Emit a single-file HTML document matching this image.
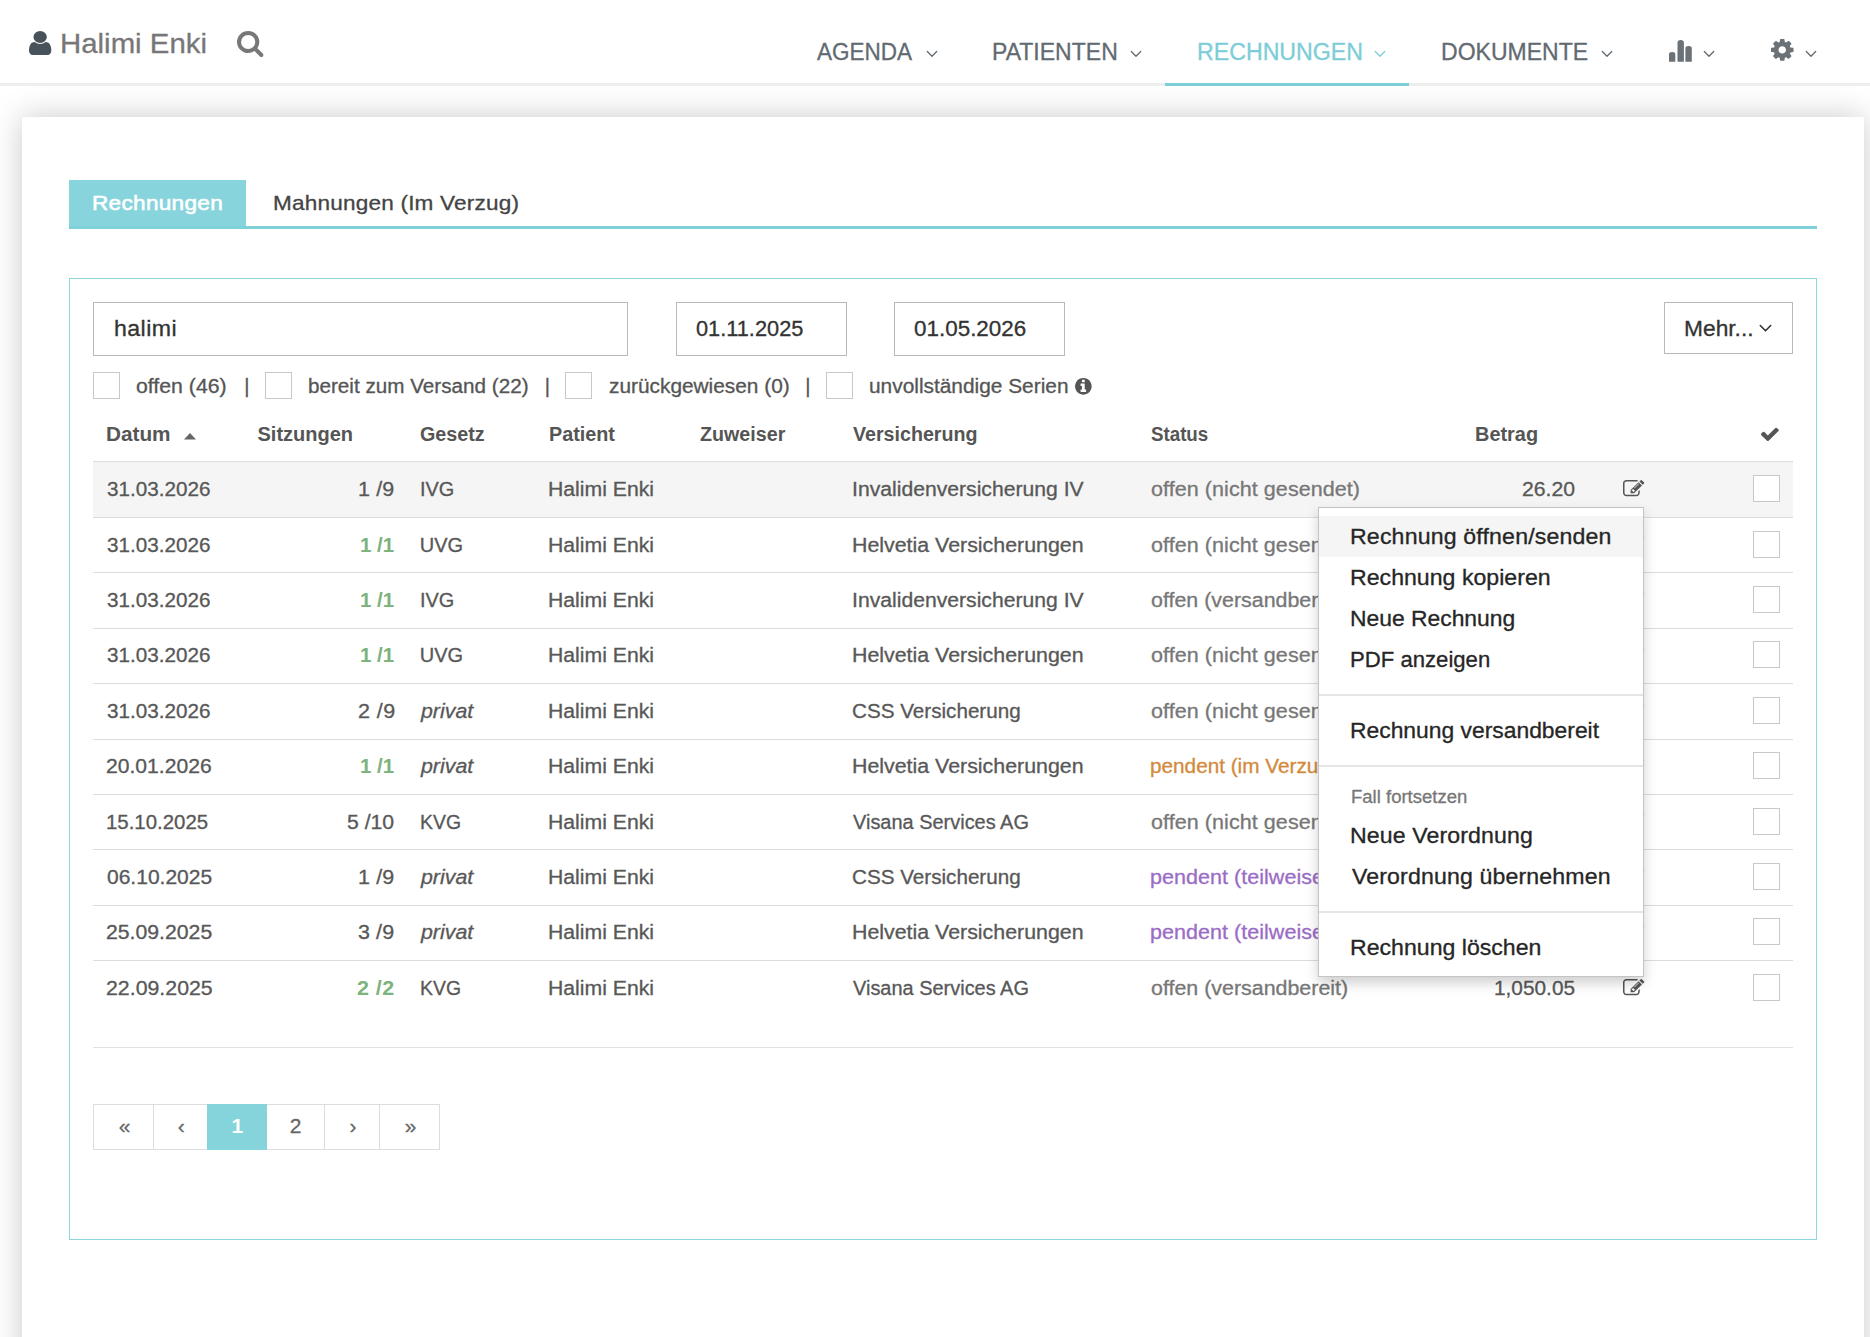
<!DOCTYPE html>
<html lang="de"><head><meta charset="utf-8"><title>Rechnungen</title>
<style>
html,body{margin:0;padding:0;background:#fff;}
body{position:relative;width:1870px;height:1337px;overflow:hidden;font-family:"Liberation Sans", Arial, sans-serif;}
.t{position:absolute;white-space:pre;display:block;transform-origin:0 0;-webkit-text-stroke:0.3px;}
.a,div.rowbg,.cb,.dd{position:absolute;display:block;}
svg.a{overflow:visible}
.cb{box-sizing:border-box;border:1px solid #c8c8c8;background:#fff;}
.inp{position:absolute;box-sizing:border-box;border:1px solid #b9b9b9;background:#fff;}
.dd{box-sizing:border-box;background:#fff;border:1px solid rgba(0,0,0,.23);box-shadow:0 6px 12px rgba(0,0,0,.19);}
#container{position:absolute;left:22px;top:117px;width:1842px;height:1300px;background:#fff;box-shadow:0 0 30px rgba(0,0,0,.21);}
#header{position:absolute;left:0;top:0;width:1870px;height:83px;background:#fff;border-bottom:3px solid #eee;}
</style></head>
<body>
<div id="container"></div>
<header id="header"></header>
<div class="brand"><svg class="a" style="left:29.4px;top:31px" width="22.300000000000004" height="24" viewBox="0 128 1280 1536" preserveAspectRatio="none"><path fill="#47525b" d="M1280 1399q0 109-62.500 187t-150.500 78h-854q-88 0-150.500-78t-62.500-187q0-85 8.500-160.500t31.500-152 58.500-131 94-89 134.500-34.500q131 128 313 128t313-128q76 0 134.500 34.500t94 89 58.500 131 31.500 152 8.500 160.500zM1024 512q0 159-112.500 271.500t-271.500 112.500-271.500-112.500-112.500-271.500 112.500-271.500 271.500-112.500 271.500 112.500 112.500 271.500z"/></svg><svg class="a" style="left:236.6px;top:31px" width="26.400000000000006" height="26" viewBox="0 128 1664 1664" preserveAspectRatio="none"><path fill="#777" d="M1152 832q0-185-131.500-316.500t-316.500-131.500-316.500 131.500-131.500 316.500 131.500 316.500 316.500 131.500 316.500-131.500 131.500-316.500zM1664 1664q0 52-38 90t-90 38q-54 0-90-38l-343-342q-179 124-399 124-143 0-273.500-55.500t-225-150-150-225-55.500-273.500 55.500-273.500 150-225 225-150 273.500-55.500 273.500 55.500 225 150 150 225 55.500 273.500q0 220-124 399l343 343q37 37 37 90z"/></svg><span class="t" style="left:59.50px;top:29.50px;font-size:28px;line-height:28px;color:#777;transform:scaleX(1.0497);">Halimi Enki</span></div>
<nav><div class="a" style="left:1165px;top:83px;width:244px;height:3px;background:#7ccfd8"></div><span class="t" style="left:817.40px;top:41.28px;font-size:23.3px;line-height:23.3px;color:#626a71;transform:scaleX(0.9671);">AGENDA</span>
<span class="t" style="left:992.31px;top:41.28px;font-size:23.3px;line-height:23.3px;color:#626a71;transform:scaleX(0.9883);">PATIENTEN</span>
<span class="t" style="left:1196.51px;top:41.28px;font-size:23.3px;line-height:23.3px;color:#7ccdd7;transform:scaleX(0.9942);">RECHNUNGEN</span>
<span class="t" style="left:1441.41px;top:41.28px;font-size:23.3px;line-height:23.3px;color:#626a71;transform:scaleX(0.9884);">DOKUMENTE</span><svg class="a" style="left:925.5px;top:49.6px" width="12.0" height="7.8" viewBox="-1 -1 12.0 7.8" ><polyline points="0.3,0.5 5.0,5.2 9.7,0.5" fill="none" stroke="#626a71" stroke-width="1.3" stroke-linecap="round" stroke-linejoin="round"/></svg><svg class="a" style="left:1129.8px;top:49.6px" width="12.0" height="7.8" viewBox="-1 -1 12.0 7.8" ><polyline points="0.3,0.5 5.0,5.2 9.7,0.5" fill="none" stroke="#626a71" stroke-width="1.3" stroke-linecap="round" stroke-linejoin="round"/></svg><svg class="a" style="left:1374.2px;top:49.6px" width="12.0" height="7.8" viewBox="-1 -1 12.0 7.8" ><polyline points="0.3,0.5 5.0,5.2 9.7,0.5" fill="none" stroke="#7ccdd7" stroke-width="1.3" stroke-linecap="round" stroke-linejoin="round"/></svg><svg class="a" style="left:1600.6px;top:49.6px" width="12.0" height="7.8" viewBox="-1 -1 12.0 7.8" ><polyline points="0.3,0.5 5.0,5.2 9.7,0.5" fill="none" stroke="#626a71" stroke-width="1.3" stroke-linecap="round" stroke-linejoin="round"/></svg><svg class="a" style="left:1668px;top:39px" width="25" height="24" viewBox="0 0 25 24" ><path fill="#6a7177" d="M1 22.7V15.2q0-2.2 3.15-2.2t3.15 2.2V22.7z M9.5 22.7V3.6q0-2.6 3.2-2.6t3.2 2.6V22.7z M17.4 22.7V9.2q0-2.2 3.2-2.2t3.2 2.2V22.7z"/></svg><svg class="a" style="left:1703.2px;top:49.6px" width="12.0" height="7.8" viewBox="-1 -1 12.0 7.8" ><polyline points="0.3,0.5 5.0,5.2 9.7,0.5" fill="none" stroke="#626a71" stroke-width="1.3" stroke-linecap="round" stroke-linejoin="round"/></svg><svg class="a" style="left:1770.5px;top:38.8px" width="22.5" height="21.800000000000004" viewBox="0 128 1536 1536" preserveAspectRatio="none"><path fill="#6a7177" d="M1024 896q0-106-75-181t-181-75-181 75-75 181 75 181 181 75 181-75 75-181zM1536 787v222q0 12-8 23t-20 13l-185 28q-19 54-39 91 35 50 107 138 10 12 10 25t-9 23q-27 37-99 108t-94 71q-12 0-26-9l-138-108q-44 23-91 38-16 136-29 186-7 28-36 28h-222q-14 0-24.500-8.500t-11.500-21.500l-28-184q-49-16-90-37l-141 107q-10 9-25 9-14 0-25-11-126-114-165-168-7-10-7-23 0-12 8-23 15-21 51-66.500t54-70.500q-27-50-41-99l-183-27q-13-2-21-12.500t-8-23.500v-222q0-12 8-23t19-13l186-28q14-46 39-92-40-57-107-138-10-12-10-24 0-10 9-23 26-36 98.500-107.500t94.500-71.500q13 0 26 10l138 107q44-23 91-38 16-136 29-186 7-28 36-28h222q14 0 24.500 8.500t11.500 21.500l28 184q49 16 90 37l142-107q9-9 24-9 13 0 25 10 129 119 165 170 7 8 7 22 0 12-8 23-15 21-51 66.500t-54 70.500q26 50 41 98l183 28q13 2 21 12.500t8 23.500z"/></svg><svg class="a" style="left:1805.3px;top:49.6px" width="12.0" height="7.8" viewBox="-1 -1 12.0 7.8" ><polyline points="0.3,0.5 5.0,5.2 9.7,0.5" fill="none" stroke="#626a71" stroke-width="1.3" stroke-linecap="round" stroke-linejoin="round"/></svg></nav>
<main>
<div class="tabs">
<div class="a" style="left:69px;top:180px;width:177px;height:49px;background:#87d4dc"></div>
<div class="a" style="left:69px;top:226px;width:1748px;height:3px;background:#7fd1d9"></div>
<span class="t" style="left:92.33px;top:192.02px;font-size:21px;line-height:21px;color:#fff;transform:scaleX(1.0750);letter-spacing:0.276px;-webkit-text-stroke:0.55px #fff;">Rechnungen</span>
<span class="t" style="left:272.82px;top:192.02px;font-size:21px;line-height:21px;color:#444;transform:scaleX(1.0750);letter-spacing:0.179px;">Mahnungen (Im Verzug)</span>
</div>
<section class="panel">
<div class="a" style="left:69px;top:278px;width:1748px;height:962px;border:1px solid #8fd6dc;box-sizing:border-box"></div>
<div class="filter">
<div class="inp" style="left:93px;top:302px;width:535px;height:54px;"></div><div class="inp" style="left:676px;top:302px;width:171px;height:54px;"></div><div class="inp" style="left:894px;top:302px;width:171px;height:54px;"></div><div class="inp" style="left:1664px;top:302px;width:129px;height:52px;"></div>
<svg class="a" style="left:1759.3px;top:324.3px" width="13" height="8.4" viewBox="-1 -1 13 8.4" ><polyline points="0.3,0.5 5.5,5.800000000000001 10.7,0.5" fill="none" stroke="#333" stroke-width="1.6" stroke-linecap="round" stroke-linejoin="round"/></svg>
<span class="cb" style="left:93px;top:372px;width:27px;height:27px;"></span><span class="cb" style="left:265px;top:372px;width:27px;height:27px;"></span><span class="cb" style="left:565px;top:372px;width:27px;height:27px;"></span><span class="cb" style="left:826px;top:372px;width:27px;height:27px;"></span><svg class="a" style="left:1074.9px;top:377.5px" width="16.699999999999818" height="16.69999999999999" viewBox="0 128 1536 1536" preserveAspectRatio="none"><path fill="#555" d="M1024 1376v-160q0-14-9-23t-23-9h-96v-512q0-14-9-23t-23-9h-320q-14 0-23 9t-9 23v160q0 14 9 23t23 9h96v320h-96q-14 0-23 9t-9 23v160q0 14 9 23t23 9h448q14 0 23-9t9-23zM896 480v-160q0-14-9-23t-23-9h-192q-14 0-23 9t-9 23v160q0 14 9 23t23 9h192q14 0 23-9t9-23zM1536 896q0 209-103 385.500t-279.500 279.500-385.500 103-385.500-103-279.500-279.500-103-385.500 103-385.500 279.500-279.500 385.500-103 385.500 103 279.500 279.500 103 385.500z"/></svg>
<span class="t" style="left:113.62px;top:318.60px;font-size:21.5px;line-height:21.5px;color:#333;transform:scaleX(1.0750);letter-spacing:0.399px;">halimi</span>
<span class="t" style="left:696.30px;top:318.60px;font-size:21.5px;line-height:21.5px;color:#333;transform:scaleX(1.0127);">01.11.2025</span>
<span class="t" style="left:914.40px;top:318.60px;font-size:21.5px;line-height:21.5px;color:#333;transform:scaleX(1.0432);">01.05.2026</span>
<span class="t" style="left:1683.94px;top:318.60px;font-size:21.5px;line-height:21.5px;color:#333;transform:scaleX(1.0589);">Mehr...</span>
<span class="t" style="left:136.00px;top:375.67px;font-size:20px;line-height:20px;color:#555;transform:scaleX(1.0628);">offen (46)</span>
<span class="t" style="left:244.20px;top:375.67px;font-size:20px;line-height:20px;color:#555;">|</span>
<span class="t" style="left:307.93px;top:375.67px;font-size:20px;line-height:20px;color:#555;transform:scaleX(1.0332);">bereit zum Versand (22)</span>
<span class="t" style="left:544.80px;top:375.67px;font-size:20px;line-height:20px;color:#555;">|</span>
<span class="t" style="left:608.70px;top:375.67px;font-size:20px;line-height:20px;color:#555;transform:scaleX(1.0420);">zurückgewiesen (0)</span>
<span class="t" style="left:805.20px;top:375.67px;font-size:20px;line-height:20px;color:#555;">|</span>
<span class="t" style="left:869.34px;top:375.67px;font-size:20px;line-height:20px;color:#555;transform:scaleX(1.0433);">unvollständige Serien</span>
</div>
<div class="table">
<div class="thead"><div class="a" style="left:93px;top:461px;width:1700px;height:1.3999999999999773px;background:#ddd"></div><span class="t" style="left:105.66px;top:424.47px;font-size:20px;line-height:20px;color:#555;transform:scaleX(1.0373);font-weight:700;-webkit-text-stroke:0;">Datum</span>
<span class="t" style="left:257.50px;top:424.47px;font-size:20px;line-height:20px;color:#555;font-weight:700;-webkit-text-stroke:0;">Sitzungen</span>
<span class="t" style="left:420.30px;top:424.47px;font-size:20px;line-height:20px;color:#555;transform:scaleX(0.9865);font-weight:700;-webkit-text-stroke:0;">Gesetz</span>
<span class="t" style="left:548.97px;top:424.47px;font-size:20px;line-height:20px;color:#555;transform:scaleX(0.9891);font-weight:700;-webkit-text-stroke:0;">Patient</span>
<span class="t" style="left:699.50px;top:424.47px;font-size:20px;line-height:20px;color:#555;transform:scaleX(0.9837);font-weight:700;-webkit-text-stroke:0;">Zuweiser</span>
<span class="t" style="left:852.70px;top:424.47px;font-size:20px;line-height:20px;color:#555;transform:scaleX(0.9825);font-weight:700;-webkit-text-stroke:0;">Versicherung</span>
<span class="t" style="left:1150.90px;top:424.47px;font-size:20px;line-height:20px;color:#555;transform:scaleX(0.9361);font-weight:700;-webkit-text-stroke:0;">Status</span>
<span class="t" style="left:1474.70px;top:424.47px;font-size:20px;line-height:20px;color:#555;transform:scaleX(0.9962);font-weight:700;-webkit-text-stroke:0;">Betrag</span><svg class="a" style="left:184px;top:432.6px" width="12" height="6.4" viewBox="0 0 12 6.4" ><path d="M0 6.4L6 0l6 6.4z" fill="#666"/></svg><svg class="a" style="left:1760.5px;top:427.5px" width="17.799999999999955" height="13.100000000000023" viewBox="121 362 1550 1160" preserveAspectRatio="none"><path fill="#555" d="M1671 566q0 40-28 68l-724 724-136 136q-28 28-68 28t-68-28l-136-136-362-362q-28-28-28-68t28-68l136-136q28-28 68-28t68 28l294 295 656-657q28-28 68-28t68 28l136 136q28 28 28 68z"/></svg></div>
<div class="tr"><div class="a" style="left:93px;top:462px;width:1700px;height:55px;background:#f5f5f5"></div><div class="a" style="left:93px;top:517px;width:1700px;height:1px;background:#dcdcdc"></div><span class="t" style="left:106.70px;top:479.27px;font-size:20px;line-height:20px;color:#585858;transform:scaleX(1.0333);">31.03.2026</span>
<span class="t" style="left:357.93px;top:479.27px;font-size:20px;line-height:20px;color:#585858;transform:scaleX(1.0750);letter-spacing:0.107px;">1 /9</span>
<span class="t" style="left:419.70px;top:479.27px;font-size:20px;line-height:20px;color:#585858;transform:scaleX(0.9971);">IVG</span>
<span class="t" style="left:547.94px;top:479.27px;font-size:20px;line-height:20px;color:#585858;transform:scaleX(1.0601);">Halimi Enki</span>
<span class="t" style="left:851.64px;top:479.27px;font-size:20px;line-height:20px;color:#585858;transform:scaleX(1.0577);">Invalidenversicherung IV</span>
<span class="t" style="left:1150.90px;top:479.27px;font-size:20px;line-height:20px;color:#777;transform:scaleX(1.0750);letter-spacing:0.063px;">offen (nicht gesendet)</span>
<span class="t" style="left:1521.84px;top:479.27px;font-size:20px;line-height:20px;color:#585858;transform:scaleX(1.0608);">26.20</span><svg class="a" style="left:1622.9px;top:480px" width="21.299999999999955" height="16.19999999999999" viewBox="0 130 1792 1410" preserveAspectRatio="none"><path fill="#555" d="M888 1184l116-116-152-152-116 116v56h96v96h56zM1328 464q-16-16-33 1l-350 350q-17 17-1 33t33-1l350-350q17-17 1-33zM1408 1058v190q0 119-84.500 203.500t-203.500 84.500h-832q-119 0-203.500-84.500t-84.500-203.500v-832q0-119 84.500-203.500t203.500-84.500h832q63 0 117 25 15 7 18 23 3 17-9 29l-49 49q-14 14-32 8-23-6-45-6h-832q-66 0-113 47t-47 113v832q0 66 47 113t113 47h832q66 0 113-47t47-113v-126q0-13 9-22l64-64q15-15 35-7t20 29zM1312 320l288 288-672 672h-288v-288zM1756 452l-92 92-288-288 92-92q28-28 68-28t68 28l152 152q28 28 28 68t-28 68z"/></svg><span class="cb" style="left:1753px;top:475px;width:27px;height:27px;"></span></div>
<div class="tr"><div class="a" style="left:93px;top:572px;width:1700px;height:1px;background:#dcdcdc"></div><span class="t" style="left:106.70px;top:534.67px;font-size:20px;line-height:20px;color:#585858;transform:scaleX(1.0333);">31.03.2026</span>
<span class="t" style="left:359.98px;top:534.67px;font-size:20px;line-height:20px;color:#7db37c;transform:scaleX(1.0237);font-weight:700;-webkit-text-stroke:0;">1 /1</span>
<span class="t" style="left:419.70px;top:534.67px;font-size:20px;line-height:20px;color:#585858;">UVG</span>
<span class="t" style="left:547.94px;top:534.67px;font-size:20px;line-height:20px;color:#585858;transform:scaleX(1.0601);">Halimi Enki</span>
<span class="t" style="left:851.63px;top:534.67px;font-size:20px;line-height:20px;color:#585858;transform:scaleX(1.0681);">Helvetia Versicherungen</span>
<span class="t" style="left:1150.90px;top:534.67px;font-size:20px;line-height:20px;color:#777;transform:scaleX(1.0750);letter-spacing:0.063px;">offen (nicht gesendet)</span>
<span class="t" style="left:1511.31px;top:534.67px;font-size:20px;line-height:20px;color:#585858;transform:scaleX(1.0400);">108.00</span><svg class="a" style="left:1622.9px;top:535px" width="21.299999999999955" height="16.200000000000045" viewBox="0 130 1792 1410" preserveAspectRatio="none"><path fill="#555" d="M888 1184l116-116-152-152-116 116v56h96v96h56zM1328 464q-16-16-33 1l-350 350q-17 17-1 33t33-1l350-350q17-17 1-33zM1408 1058v190q0 119-84.500 203.500t-203.500 84.500h-832q-119 0-203.500-84.500t-84.500-203.500v-832q0-119 84.500-203.500t203.500-84.500h832q63 0 117 25 15 7 18 23 3 17-9 29l-49 49q-14 14-32 8-23-6-45-6h-832q-66 0-113 47t-47 113v832q0 66 47 113t113 47h832q66 0 113-47t47-113v-126q0-13 9-22l64-64q15-15 35-7t20 29zM1312 320l288 288-672 672h-288v-288zM1756 452l-92 92-288-288 92-92q28-28 68-28t68 28l152 152q28 28 28 68t-28 68z"/></svg><span class="cb" style="left:1753px;top:531px;width:27px;height:27px;"></span></div>
<div class="tr"><div class="a" style="left:93px;top:628px;width:1700px;height:1px;background:#dcdcdc"></div><span class="t" style="left:106.70px;top:590.07px;font-size:20px;line-height:20px;color:#585858;transform:scaleX(1.0333);">31.03.2026</span>
<span class="t" style="left:359.98px;top:590.07px;font-size:20px;line-height:20px;color:#7db37c;transform:scaleX(1.0237);font-weight:700;-webkit-text-stroke:0;">1 /1</span>
<span class="t" style="left:419.70px;top:590.07px;font-size:20px;line-height:20px;color:#585858;transform:scaleX(0.9971);">IVG</span>
<span class="t" style="left:547.94px;top:590.07px;font-size:20px;line-height:20px;color:#585858;transform:scaleX(1.0601);">Halimi Enki</span>
<span class="t" style="left:851.64px;top:590.07px;font-size:20px;line-height:20px;color:#585858;transform:scaleX(1.0577);">Invalidenversicherung IV</span>
<span class="t" style="left:1150.90px;top:590.07px;font-size:20px;line-height:20px;color:#777;transform:scaleX(1.0702);">offen (versandbereit)</span>
<span class="t" style="left:1522.88px;top:590.07px;font-size:20px;line-height:20px;color:#585858;transform:scaleX(1.0400);">48.00</span><svg class="a" style="left:1622.9px;top:591px" width="21.299999999999955" height="16.200000000000045" viewBox="0 130 1792 1410" preserveAspectRatio="none"><path fill="#555" d="M888 1184l116-116-152-152-116 116v56h96v96h56zM1328 464q-16-16-33 1l-350 350q-17 17-1 33t33-1l350-350q17-17 1-33zM1408 1058v190q0 119-84.500 203.500t-203.500 84.500h-832q-119 0-203.500-84.500t-84.500-203.500v-832q0-119 84.500-203.500t203.500-84.500h832q63 0 117 25 15 7 18 23 3 17-9 29l-49 49q-14 14-32 8-23-6-45-6h-832q-66 0-113 47t-47 113v832q0 66 47 113t113 47h832q66 0 113-47t47-113v-126q0-13 9-22l64-64q15-15 35-7t20 29zM1312 320l288 288-672 672h-288v-288zM1756 452l-92 92-288-288 92-92q28-28 68-28t68 28l152 152q28 28 28 68t-28 68z"/></svg><span class="cb" style="left:1753px;top:586px;width:27px;height:27px;"></span></div>
<div class="tr"><div class="a" style="left:93px;top:683px;width:1700px;height:1px;background:#dcdcdc"></div><span class="t" style="left:106.70px;top:645.47px;font-size:20px;line-height:20px;color:#585858;transform:scaleX(1.0333);">31.03.2026</span>
<span class="t" style="left:359.98px;top:645.47px;font-size:20px;line-height:20px;color:#7db37c;transform:scaleX(1.0237);font-weight:700;-webkit-text-stroke:0;">1 /1</span>
<span class="t" style="left:419.70px;top:645.47px;font-size:20px;line-height:20px;color:#585858;">UVG</span>
<span class="t" style="left:547.94px;top:645.47px;font-size:20px;line-height:20px;color:#585858;transform:scaleX(1.0601);">Halimi Enki</span>
<span class="t" style="left:851.63px;top:645.47px;font-size:20px;line-height:20px;color:#585858;transform:scaleX(1.0681);">Helvetia Versicherungen</span>
<span class="t" style="left:1150.90px;top:645.47px;font-size:20px;line-height:20px;color:#777;transform:scaleX(1.0750);letter-spacing:0.063px;">offen (nicht gesendet)</span>
<span class="t" style="left:1511.31px;top:645.47px;font-size:20px;line-height:20px;color:#585858;transform:scaleX(1.0400);">108.00</span><svg class="a" style="left:1622.9px;top:646px" width="21.299999999999955" height="16.200000000000045" viewBox="0 130 1792 1410" preserveAspectRatio="none"><path fill="#555" d="M888 1184l116-116-152-152-116 116v56h96v96h56zM1328 464q-16-16-33 1l-350 350q-17 17-1 33t33-1l350-350q17-17 1-33zM1408 1058v190q0 119-84.500 203.500t-203.500 84.500h-832q-119 0-203.500-84.500t-84.500-203.500v-832q0-119 84.500-203.500t203.500-84.500h832q63 0 117 25 15 7 18 23 3 17-9 29l-49 49q-14 14-32 8-23-6-45-6h-832q-66 0-113 47t-47 113v832q0 66 47 113t113 47h832q66 0 113-47t47-113v-126q0-13 9-22l64-64q15-15 35-7t20 29zM1312 320l288 288-672 672h-288v-288zM1756 452l-92 92-288-288 92-92q28-28 68-28t68 28l152 152q28 28 28 68t-28 68z"/></svg><span class="cb" style="left:1753px;top:641px;width:27px;height:27px;"></span></div>
<div class="tr"><div class="a" style="left:93px;top:739px;width:1700px;height:1px;background:#dcdcdc"></div><span class="t" style="left:106.70px;top:700.87px;font-size:20px;line-height:20px;color:#585858;transform:scaleX(1.0333);">31.03.2026</span>
<span class="t" style="left:357.88px;top:700.87px;font-size:20px;line-height:20px;color:#585858;transform:scaleX(1.0750);letter-spacing:0.417px;">2 /9</span>
<span class="t" style="left:421.07px;top:700.87px;font-size:20px;line-height:20px;color:#585858;transform:scaleX(1.0672);font-style:italic;">privat</span>
<span class="t" style="left:547.94px;top:700.87px;font-size:20px;line-height:20px;color:#585858;transform:scaleX(1.0601);">Halimi Enki</span>
<span class="t" style="left:851.67px;top:700.87px;font-size:20px;line-height:20px;color:#585858;transform:scaleX(1.0323);">CSS Versicherung</span>
<span class="t" style="left:1150.90px;top:700.87px;font-size:20px;line-height:20px;color:#777;transform:scaleX(1.0750);letter-spacing:0.063px;">offen (nicht gesendet)</span>
<span class="t" style="left:1522.88px;top:700.87px;font-size:20px;line-height:20px;color:#585858;transform:scaleX(1.0400);">96.00</span><svg class="a" style="left:1622.9px;top:702px" width="21.299999999999955" height="16.200000000000045" viewBox="0 130 1792 1410" preserveAspectRatio="none"><path fill="#555" d="M888 1184l116-116-152-152-116 116v56h96v96h56zM1328 464q-16-16-33 1l-350 350q-17 17-1 33t33-1l350-350q17-17 1-33zM1408 1058v190q0 119-84.500 203.500t-203.500 84.500h-832q-119 0-203.500-84.500t-84.500-203.500v-832q0-119 84.500-203.500t203.500-84.500h832q63 0 117 25 15 7 18 23 3 17-9 29l-49 49q-14 14-32 8-23-6-45-6h-832q-66 0-113 47t-47 113v832q0 66 47 113t113 47h832q66 0 113-47t47-113v-126q0-13 9-22l64-64q15-15 35-7t20 29zM1312 320l288 288-672 672h-288v-288zM1756 452l-92 92-288-288 92-92q28-28 68-28t68 28l152 152q28 28 28 68t-28 68z"/></svg><span class="cb" style="left:1753px;top:697px;width:27px;height:27px;"></span></div>
<div class="tr"><div class="a" style="left:93px;top:794px;width:1700px;height:1px;background:#dcdcdc"></div><span class="t" style="left:105.64px;top:756.27px;font-size:20px;line-height:20px;color:#585858;transform:scaleX(1.0558);">20.01.2026</span>
<span class="t" style="left:359.98px;top:756.27px;font-size:20px;line-height:20px;color:#7db37c;transform:scaleX(1.0237);font-weight:700;-webkit-text-stroke:0;">1 /1</span>
<span class="t" style="left:421.07px;top:756.27px;font-size:20px;line-height:20px;color:#585858;transform:scaleX(1.0672);font-style:italic;">privat</span>
<span class="t" style="left:547.94px;top:756.27px;font-size:20px;line-height:20px;color:#585858;transform:scaleX(1.0601);">Halimi Enki</span>
<span class="t" style="left:851.63px;top:756.27px;font-size:20px;line-height:20px;color:#585858;transform:scaleX(1.0681);">Helvetia Versicherungen</span>
<span class="t" style="left:1149.86px;top:756.27px;font-size:20px;line-height:20px;color:#d28a3c;transform:scaleX(1.0368);">pendent (im Verzug)</span>
<span class="t" style="left:1522.88px;top:756.27px;font-size:20px;line-height:20px;color:#585858;transform:scaleX(1.0400);">48.00</span><svg class="a" style="left:1622.9px;top:757px" width="21.299999999999955" height="16.200000000000045" viewBox="0 130 1792 1410" preserveAspectRatio="none"><path fill="#555" d="M888 1184l116-116-152-152-116 116v56h96v96h56zM1328 464q-16-16-33 1l-350 350q-17 17-1 33t33-1l350-350q17-17 1-33zM1408 1058v190q0 119-84.500 203.500t-203.500 84.500h-832q-119 0-203.500-84.500t-84.500-203.500v-832q0-119 84.500-203.500t203.500-84.500h832q63 0 117 25 15 7 18 23 3 17-9 29l-49 49q-14 14-32 8-23-6-45-6h-832q-66 0-113 47t-47 113v832q0 66 47 113t113 47h832q66 0 113-47t47-113v-126q0-13 9-22l64-64q15-15 35-7t20 29zM1312 320l288 288-672 672h-288v-288zM1756 452l-92 92-288-288 92-92q28-28 68-28t68 28l152 152q28 28 28 68t-28 68z"/></svg><span class="cb" style="left:1753px;top:752px;width:27px;height:27px;"></span></div>
<div class="tr"><div class="a" style="left:93px;top:849px;width:1700px;height:1px;background:#dcdcdc"></div><span class="t" style="left:105.68px;top:811.67px;font-size:20px;line-height:20px;color:#585858;transform:scaleX(1.0205);">15.10.2025</span>
<span class="t" style="left:347.00px;top:811.67px;font-size:20px;line-height:20px;color:#585858;transform:scaleX(1.0595);">5 /10</span>
<span class="t" style="left:419.73px;top:811.67px;font-size:20px;line-height:20px;color:#585858;transform:scaleX(0.9710);">KVG</span>
<span class="t" style="left:547.94px;top:811.67px;font-size:20px;line-height:20px;color:#585858;transform:scaleX(1.0601);">Halimi Enki</span>
<span class="t" style="left:852.70px;top:811.67px;font-size:20px;line-height:20px;color:#585858;transform:scaleX(0.9975);">Visana Services AG</span>
<span class="t" style="left:1150.90px;top:811.67px;font-size:20px;line-height:20px;color:#777;transform:scaleX(1.0750);letter-spacing:0.063px;">offen (nicht gesendet)</span>
<span class="t" style="left:1511.31px;top:811.67px;font-size:20px;line-height:20px;color:#585858;transform:scaleX(1.0400);">240.00</span><svg class="a" style="left:1622.9px;top:812px" width="21.299999999999955" height="16.200000000000045" viewBox="0 130 1792 1410" preserveAspectRatio="none"><path fill="#555" d="M888 1184l116-116-152-152-116 116v56h96v96h56zM1328 464q-16-16-33 1l-350 350q-17 17-1 33t33-1l350-350q17-17 1-33zM1408 1058v190q0 119-84.500 203.500t-203.500 84.500h-832q-119 0-203.500-84.500t-84.500-203.500v-832q0-119 84.500-203.500t203.500-84.500h832q63 0 117 25 15 7 18 23 3 17-9 29l-49 49q-14 14-32 8-23-6-45-6h-832q-66 0-113 47t-47 113v832q0 66 47 113t113 47h832q66 0 113-47t47-113v-126q0-13 9-22l64-64q15-15 35-7t20 29zM1312 320l288 288-672 672h-288v-288zM1756 452l-92 92-288-288 92-92q28-28 68-28t68 28l152 152q28 28 28 68t-28 68z"/></svg><span class="cb" style="left:1753px;top:808px;width:27px;height:27px;"></span></div>
<div class="tr"><div class="a" style="left:93px;top:905px;width:1700px;height:1px;background:#dcdcdc"></div><span class="t" style="left:106.70px;top:867.07px;font-size:20px;line-height:20px;color:#585858;transform:scaleX(1.0503);">06.10.2025</span>
<span class="t" style="left:357.93px;top:867.07px;font-size:20px;line-height:20px;color:#585858;transform:scaleX(1.0750);letter-spacing:0.107px;">1 /9</span>
<span class="t" style="left:421.07px;top:867.07px;font-size:20px;line-height:20px;color:#585858;transform:scaleX(1.0672);font-style:italic;">privat</span>
<span class="t" style="left:547.94px;top:867.07px;font-size:20px;line-height:20px;color:#585858;transform:scaleX(1.0601);">Halimi Enki</span>
<span class="t" style="left:851.67px;top:867.07px;font-size:20px;line-height:20px;color:#585858;transform:scaleX(1.0323);">CSS Versicherung</span>
<span class="t" style="left:1149.83px;top:867.07px;font-size:20px;line-height:20px;color:#9a6cc6;transform:scaleX(1.0750);letter-spacing:0.037px;">pendent (teilweise bezahlt)</span>
<span class="t" style="left:1522.88px;top:867.07px;font-size:20px;line-height:20px;color:#585858;transform:scaleX(1.0400);">48.00</span><svg class="a" style="left:1622.9px;top:868px" width="21.299999999999955" height="16.200000000000045" viewBox="0 130 1792 1410" preserveAspectRatio="none"><path fill="#555" d="M888 1184l116-116-152-152-116 116v56h96v96h56zM1328 464q-16-16-33 1l-350 350q-17 17-1 33t33-1l350-350q17-17 1-33zM1408 1058v190q0 119-84.500 203.500t-203.500 84.500h-832q-119 0-203.500-84.500t-84.500-203.500v-832q0-119 84.500-203.500t203.500-84.500h832q63 0 117 25 15 7 18 23 3 17-9 29l-49 49q-14 14-32 8-23-6-45-6h-832q-66 0-113 47t-47 113v832q0 66 47 113t113 47h832q66 0 113-47t47-113v-126q0-13 9-22l64-64q15-15 35-7t20 29zM1312 320l288 288-672 672h-288v-288zM1756 452l-92 92-288-288 92-92q28-28 68-28t68 28l152 152q28 28 28 68t-28 68z"/></svg><span class="cb" style="left:1753px;top:863px;width:27px;height:27px;"></span></div>
<div class="tr"><div class="a" style="left:93px;top:960px;width:1700px;height:1px;background:#dcdcdc"></div><span class="t" style="left:105.64px;top:922.47px;font-size:20px;line-height:20px;color:#585858;transform:scaleX(1.0609);">25.09.2025</span>
<span class="t" style="left:358.00px;top:922.47px;font-size:20px;line-height:20px;color:#585858;transform:scaleX(1.0750);letter-spacing:0.084px;">3 /9</span>
<span class="t" style="left:421.07px;top:922.47px;font-size:20px;line-height:20px;color:#585858;transform:scaleX(1.0672);font-style:italic;">privat</span>
<span class="t" style="left:547.94px;top:922.47px;font-size:20px;line-height:20px;color:#585858;transform:scaleX(1.0601);">Halimi Enki</span>
<span class="t" style="left:851.63px;top:922.47px;font-size:20px;line-height:20px;color:#585858;transform:scaleX(1.0681);">Helvetia Versicherungen</span>
<span class="t" style="left:1149.83px;top:922.47px;font-size:20px;line-height:20px;color:#9a6cc6;transform:scaleX(1.0750);letter-spacing:0.037px;">pendent (teilweise bezahlt)</span>
<span class="t" style="left:1511.31px;top:922.47px;font-size:20px;line-height:20px;color:#585858;transform:scaleX(1.0400);">144.00</span><svg class="a" style="left:1622.9px;top:923px" width="21.299999999999955" height="16.200000000000045" viewBox="0 130 1792 1410" preserveAspectRatio="none"><path fill="#555" d="M888 1184l116-116-152-152-116 116v56h96v96h56zM1328 464q-16-16-33 1l-350 350q-17 17-1 33t33-1l350-350q17-17 1-33zM1408 1058v190q0 119-84.500 203.500t-203.500 84.500h-832q-119 0-203.500-84.500t-84.500-203.500v-832q0-119 84.500-203.500t203.500-84.500h832q63 0 117 25 15 7 18 23 3 17-9 29l-49 49q-14 14-32 8-23-6-45-6h-832q-66 0-113 47t-47 113v832q0 66 47 113t113 47h832q66 0 113-47t47-113v-126q0-13 9-22l64-64q15-15 35-7t20 29zM1312 320l288 288-672 672h-288v-288zM1756 452l-92 92-288-288 92-92q28-28 68-28t68 28l152 152q28 28 28 68t-28 68z"/></svg><span class="cb" style="left:1753px;top:918px;width:27px;height:27px;"></span></div>
<div class="tr"><span class="t" style="left:105.63px;top:977.87px;font-size:20px;line-height:20px;color:#585858;transform:scaleX(1.0659);">22.09.2025</span>
<span class="t" style="left:357.00px;top:977.87px;font-size:20px;line-height:20px;color:#7db37c;transform:scaleX(1.0750);letter-spacing:0.394px;font-weight:700;-webkit-text-stroke:0;">2 /2</span>
<span class="t" style="left:419.73px;top:977.87px;font-size:20px;line-height:20px;color:#585858;transform:scaleX(0.9710);">KVG</span>
<span class="t" style="left:547.94px;top:977.87px;font-size:20px;line-height:20px;color:#585858;transform:scaleX(1.0601);">Halimi Enki</span>
<span class="t" style="left:852.70px;top:977.87px;font-size:20px;line-height:20px;color:#585858;transform:scaleX(0.9975);">Visana Services AG</span>
<span class="t" style="left:1150.90px;top:977.87px;font-size:20px;line-height:20px;color:#777;transform:scaleX(1.0702);">offen (versandbereit)</span>
<span class="t" style="left:1493.86px;top:977.87px;font-size:20px;line-height:20px;color:#585858;transform:scaleX(1.0413);">1,050.05</span><svg class="a" style="left:1622.9px;top:979px" width="21.299999999999955" height="16.200000000000045" viewBox="0 130 1792 1410" preserveAspectRatio="none"><path fill="#555" d="M888 1184l116-116-152-152-116 116v56h96v96h56zM1328 464q-16-16-33 1l-350 350q-17 17-1 33t33-1l350-350q17-17 1-33zM1408 1058v190q0 119-84.500 203.500t-203.500 84.500h-832q-119 0-203.500-84.500t-84.500-203.500v-832q0-119 84.500-203.500t203.500-84.500h832q63 0 117 25 15 7 18 23 3 17-9 29l-49 49q-14 14-32 8-23-6-45-6h-832q-66 0-113 47t-47 113v832q0 66 47 113t113 47h832q66 0 113-47t47-113v-126q0-13 9-22l64-64q15-15 35-7t20 29zM1312 320l288 288-672 672h-288v-288zM1756 452l-92 92-288-288 92-92q28-28 68-28t68 28l152 152q28 28 28 68t-28 68z"/></svg><span class="cb" style="left:1753px;top:974px;width:27px;height:27px;"></span></div>
<div class="a" style="left:93px;top:1047px;width:1700px;height:1px;background:#e2e2e2"></div>
</div>
<div class="pagination"><div class="a" style="left:93px;top:1104px;width:347px;height:46px;border:1px solid #ddd;box-sizing:border-box"></div><div class="a" style="left:153px;top:1104px;width:1px;height:46px;background:#ddd"></div><div class="a" style="left:324px;top:1104px;width:1px;height:46px;background:#ddd"></div><div class="a" style="left:379px;top:1104px;width:1px;height:46px;background:#ddd"></div><div class="a" style="left:207px;top:1104px;width:60px;height:46px;background:#85d3db"></div><span class="t" style="left:118.80px;top:1114.92px;font-size:21px;line-height:21px;color:#666;">«</span>
<span class="t" style="left:177.70px;top:1114.92px;font-size:21px;line-height:21px;color:#666;">‹</span>
<span class="t" style="left:231.40px;top:1114.92px;font-size:21px;line-height:21px;color:#fff;font-weight:700;-webkit-text-stroke:0;">1</span>
<span class="t" style="left:289.70px;top:1114.92px;font-size:21px;line-height:21px;color:#666;">2</span>
<span class="t" style="left:349.50px;top:1114.92px;font-size:21px;line-height:21px;color:#666;">›</span>
<span class="t" style="left:404.70px;top:1114.92px;font-size:21px;line-height:21px;color:#666;">»</span></div>
<div class="dropdown"><div class="dd" style="left:1318px;top:507px;width:326px;height:470px"></div><div class="a" style="left:1319px;top:516px;width:324px;height:41px;background:#f5f5f5"></div><div class="a" style="left:1319px;top:694px;width:324px;height:2px;background:#e5e5e5"></div><div class="a" style="left:1319px;top:765px;width:324px;height:2px;background:#e5e5e5"></div><div class="a" style="left:1319px;top:911px;width:324px;height:2px;background:#e5e5e5"></div><span class="t" style="left:1350.42px;top:526.80px;font-size:21.5px;line-height:21.5px;color:#262626;transform:scaleX(1.0750);letter-spacing:0.156px;">Rechnung öffnen/senden</span>
<span class="t" style="left:1350.42px;top:568.20px;font-size:21.5px;line-height:21.5px;color:#262626;transform:scaleX(1.0750);letter-spacing:0.009px;">Rechnung kopieren</span>
<span class="t" style="left:1350.44px;top:609.40px;font-size:21.5px;line-height:21.5px;color:#262626;transform:scaleX(1.0630);">Neue Rechnung</span>
<span class="t" style="left:1350.47px;top:650.00px;font-size:21.5px;line-height:21.5px;color:#262626;transform:scaleX(1.0291);">PDF anzeigen</span>
<span class="t" style="left:1350.44px;top:721.40px;font-size:21.5px;line-height:21.5px;color:#262626;transform:scaleX(1.0631);">Rechnung versandbereit</span>
<span class="t" style="left:1350.78px;top:788.79px;font-size:17.5px;line-height:17.5px;color:#777;transform:scaleX(1.0585);">Fall fortsetzen</span>
<span class="t" style="left:1350.42px;top:826.00px;font-size:21.5px;line-height:21.5px;color:#262626;transform:scaleX(1.0750);letter-spacing:0.107px;">Neue Verordnung</span>
<span class="t" style="left:1351.50px;top:867.00px;font-size:21.5px;line-height:21.5px;color:#262626;transform:scaleX(1.0750);letter-spacing:0.131px;">Verordnung übernehmen</span>
<span class="t" style="left:1350.43px;top:938.20px;font-size:21.5px;line-height:21.5px;color:#262626;transform:scaleX(1.0747);">Rechnung löschen</span></div>
</section>
</main>
</body></html>
